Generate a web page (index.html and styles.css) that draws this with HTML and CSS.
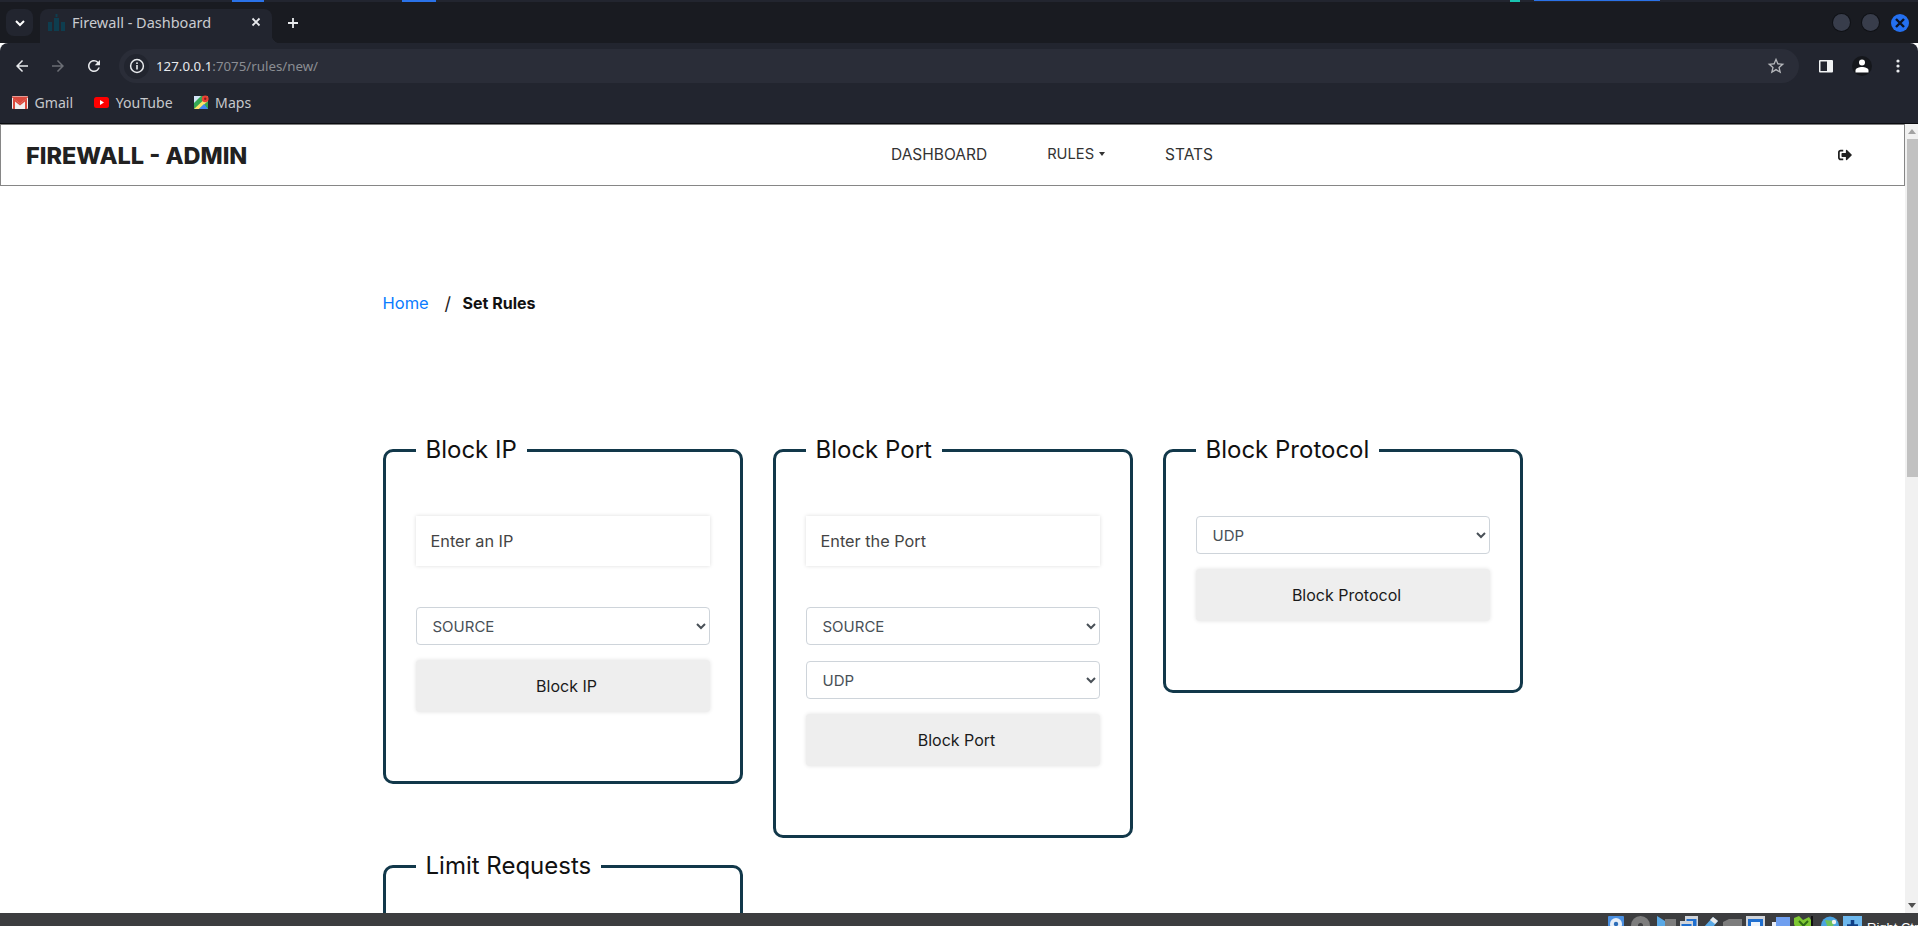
FILE: index.html
```html
<!DOCTYPE html>
<html lang="en">
<head>
<meta charset="utf-8">
<title>Firewall - Dashboard</title>
<link rel="stylesheet" href="styles.css">
</head>
<body>
<div class="desktop-strip"></div>
<header class="tabstrip">
  <button class="tab-search"><svg width="12" height="12" viewBox="0 0 12 12"><path d="M2 4l4 4 4-4" fill="none" stroke="#fff" stroke-width="2"/></svg></button>
  <div class="tab">
    <svg class="favicon" width="17" height="17" viewBox="0 0 17 17"><g fill="#0e3d4f"><rect x="0" y="8" width="4" height="9"/><rect x="6" y="4" width="5" height="13"/><rect x="13" y="8" width="4" height="9"/><rect x="7.5" y="0" width="2" height="3"/></g></svg>
    <span class="tab-title">Firewall - Dashboard</span>
    <svg class="tab-close" width="10" height="10" viewBox="0 0 10 10"><path d="M1.5 1.5l7 7M8.5 1.5l-7 7" stroke="#e8eaed" stroke-width="1.8"/></svg>
  </div>
  <svg class="new-tab" width="12" height="12" viewBox="0 0 12 12"><path d="M6 1v10M1 6h10" stroke="#e8eaed" stroke-width="1.8"/></svg>
  <div class="window-controls">
    <span class="win-btn"></span>
    <span class="win-btn"></span>
    <span class="win-btn win-close"><svg width="10" height="10" viewBox="0 0 10 10"><path d="M1 1l8 8M9 1l-8 8" stroke="#0c1220" stroke-width="2.4"/></svg></span>
  </div>
</header>
<nav class="toolbar">
  <svg class="tool" width="18" height="18" viewBox="0 0 24 24"><path fill="#e8eaed" d="M20 11H7.83l5.59-5.59L12 4l-8 8 8 8 1.41-1.41L7.83 13H20v-2z"/></svg>
  <svg class="tool" width="18" height="18" viewBox="0 0 24 24"><path fill="#6b6e75" d="M4 11h12.17l-5.59-5.59L12 4l8 8-8 8-1.41-1.41L16.17 13H4v-2z"/></svg>
  <svg class="tool" width="18" height="18" viewBox="0 0 24 24"><path fill="#e8eaed" d="M17.65 6.35A7.958 7.958 0 0 0 12 4c-4.42 0-7.99 3.58-7.99 8s3.57 8 7.99 8c3.73 0 6.84-2.55 7.73-6h-2.08A5.99 5.99 0 0 1 12 18c-3.31 0-6-2.69-6-6s2.69-6 6-6c1.66 0 3.14.69 4.22 1.78L13 11h7V4l-2.35 2.35z"/></svg>
  <div class="omnibox">
    <span class="site-info"><svg width="16" height="16" viewBox="0 0 16 16"><circle cx="8" cy="8" r="6.4" fill="none" stroke="#e8eaed" stroke-width="1.5"/><rect x="7.2" y="7" width="1.6" height="4.5" fill="#e8eaed"/><rect x="7.2" y="4.4" width="1.6" height="1.6" fill="#e8eaed"/></svg></span>
    <span class="url"><span class="url-host">127.0.0.1</span>:7075/rules/new/</span>
    <svg class="star" width="20" height="20" viewBox="0 0 24 24"><path fill="#b4b6ba" d="M22 9.24l-7.19-.62L12 2 9.19 8.63 2 9.24l5.46 4.73L5.82 21 12 17.27 18.18 21l-1.63-7.03L22 9.24zM12 15.4l-3.76 2.27 1-4.28-3.32-2.88 4.38-.38L12 6.1l1.71 4.04 4.38.38-3.32 2.88 1 4.28L12 15.4z"/></svg>
  </div>
  <div class="tool-right">
    <svg width="16" height="16" viewBox="0 0 16 16"><rect x="1" y="2" width="14" height="12.5" rx="1" fill="#f1f3f4"/><rect x="2.5" y="3.5" width="6.5" height="9.5" fill="#22252f"/></svg>
    <span class="profile"><svg width="14" height="14" viewBox="0 0 14 14"><circle cx="7" cy="3.6" r="3" fill="#fff"/><path d="M0.5 13.5v-2c0-2.2 3.5-3.4 6.5-3.4s6.5 1.2 6.5 3.4v2z" fill="#fff"/></svg></span>
    <svg class="menu-dots" width="4" height="14" viewBox="0 0 4 14"><circle cx="2" cy="2" r="1.6" fill="#e8eaed"/><circle cx="2" cy="7" r="1.6" fill="#e8eaed"/><circle cx="2" cy="12" r="1.6" fill="#e8eaed"/></svg>
  </div>
</nav>
<div class="bookmarks">
  <a class="bookmark"><svg width="16" height="13" viewBox="0 0 16 13"><rect width="16" height="13" rx="1" fill="#eee"/><path d="M1 13V2l7 5.5L15 2v11h-2V5.5L8 9.5 3 5.5V13z" fill="#d9493d"/><path d="M0 1.5l8 6 8-6V.5H0z" fill="#d9493d"/></svg>Gmail</a>
  <a class="bookmark"><svg width="15" height="11" viewBox="0 0 15 11"><rect width="15" height="11" rx="2.5" fill="#f00"/><path d="M6 3l4 2.5L6 8z" fill="#fff"/></svg>YouTube</a>
  <a class="bookmark"><svg width="15" height="15" viewBox="0 0 15 15"><rect y="1" width="14" height="13" fill="#34a853"/><path d="M0 14L14 1v5L5 14z" fill="#fbe36b"/><path d="M5 14l5-5 4 5z" fill="#4285f4"/><path d="M0 1h7L0 8z" fill="#d3e4f7"/><circle cx="11.2" cy="3.8" r="3.4" fill="#ea4335"/><circle cx="11.2" cy="3.8" r="1.2" fill="#8e1f18"/></svg>Maps</a>
</div>
<div class="viewport">
  <div class="page">
    <header class="navbar">
      <a class="brand">FIREWALL - ADMIN</a>
      <ul class="nav">
        <li>DASHBOARD</li>
        <li class="dropdown">RULES</li>
        <li>STATS</li>
      </ul>
      <svg class="logout" width="14" height="14" viewBox="0 0 512 512"><path fill="#212121" d="M497 273L329 441c-15 15-41 4.500-41-17v-96H152c-13.300 0-24-10.700-24-24v-96c0-13.300 10.700-24 24-24h136V88c0-21.400 25.900-32 41-17l168 168c9.300 9.400 9.300 24.600 0 34zM192 436v-40c0-6.600-5.400-12-12-12H96c-17.700 0-32-14.300-32-32V160c0-17.700 14.300-32 32-32h84c6.600 0 12-5.400 12-12V76c0-6.600-5.400-12-12-12H96c-53 0-96 43-96 96v192c0 53 43 96 96 96h84c6.600 0 12-5.400 12-12z"/></svg>
    </header>
    <main class="container">
      <div class="breadcrumb"><a class="crumb-link">Home</a><span class="crumb-sep">/</span><strong class="crumb-current">Set Rules</strong></div>
      <div class="cards">
        <fieldset class="card">
          <legend>Block IP</legend>
          <form class="card-form">
            <input class="field field-first" placeholder="Enter an IP">
            <select class="select"><option>SOURCE</option></select>
            <button type="button" class="btn">Block IP</button>
          </form>
        </fieldset>
        <fieldset class="card">
          <legend>Block Port</legend>
          <form class="card-form">
            <input class="field field-first" placeholder="Enter the Port">
            <select class="select"><option>SOURCE</option></select>
            <select class="select select-next"><option>UDP</option></select>
            <button type="button" class="btn">Block Port</button>
          </form>
        </fieldset>
        <fieldset class="card">
          <legend>Block Protocol</legend>
          <form class="card-form">
            <select class="select"><option>UDP</option></select>
            <button type="button" class="btn">Block Protocol</button>
          </form>
        </fieldset>
        <fieldset class="card">
          <legend>Limit Requests</legend>
          <form class="card-form">
            <input class="field field-first" placeholder="Enter a limit">
          </form>
        </fieldset>
      </div>
    </main>
  </div>
  <div class="scrollbar">
    <span class="arrow-up"></span>
    <span class="thumb"></span>
    <span class="arrow-down"></span>
  </div>
</div>
<footer class="taskbar">
  <svg width="16" height="18" viewBox="0 0 16 18"><rect width="16" height="18" rx="1" fill="#4a90e2"/><circle cx="8" cy="8" r="6" fill="#e6eef8"/><circle cx="8" cy="8" r="2.2" fill="#2d6db8"/></svg>
  <svg class="gap-a" width="19" height="18" viewBox="0 0 19 18"><circle cx="9.500" cy="9.500" r="9.500" fill="#7d7d7d"/><circle cx="9.500" cy="9.500" r="2.500" fill="#3c3d3f"/></svg>
  <svg class="gap-a" width="19" height="18" viewBox="0 0 19 18"><path d="M0 0l8 5v13H0z" fill="#5aa9e6"/><rect x="8" y="3" width="11" height="15" fill="#7d7d7d"/></svg>
  <svg width="18" height="18" viewBox="0 0 18 18"><rect x="5" width="13" height="11" fill="#d0d4da"/><rect x="6.500" y="3" width="10" height="7" fill="#1f6fd0"/><rect y="5" width="13" height="13" fill="#d0d4da"/><rect x="1.500" y="8" width="10" height="10" fill="#1f6fd0"/></svg>
  <svg width="17" height="18" viewBox="0 0 17 18"><path d="M11 1l5 4-9 11-6-4z" fill="#5aa9e6"/><path d="M11 1l5 4-3 3-5-4z" fill="#e8e8e8"/></svg>
  <svg width="19" height="18" viewBox="0 0 19 18"><path d="M0 6l6-3h13v15H0z" fill="#7d7d7d"/></svg>
  <svg width="19" height="18" viewBox="0 0 19 18"><rect width="19" height="18" fill="#d0d4da"/><rect x="2" y="3" width="15" height="15" fill="#1f6fd0"/><rect x="5" y="6" width="9" height="12" fill="#eef4fb"/></svg>
  <svg class="gap-a" width="18" height="18" viewBox="0 0 18 18"><rect x="4" y="1" width="14" height="17" fill="#6f9ff0"/><rect y="6" width="4" height="12" fill="#e8eef8"/></svg>
  <svg width="20" height="18" viewBox="0 0 20 18"><path d="M0 2l5-2 4 4 6-3 4 6-3 11H4L0 8z" fill="#7ec832"/><path d="M5 5l9 9M14 5l-9 9" stroke="#2f6b16" stroke-width="2"/><rect x="17" width="2" height="18" fill="#111"/></svg>
  <svg class="gap-a" width="18" height="18" viewBox="0 0 18 18"><circle cx="9" cy="9.500" r="9" fill="#4aa3e0"/><path d="M4 4l10 1-5 13z" fill="#6fc35c"/><circle cx="13" cy="6" r="2.200" fill="#f0f0f0"/></svg>
  <svg width="19" height="18" viewBox="0 0 19 18"><rect width="19" height="18" fill="#6db8ee"/><path d="M9.500 4v14M4 10h11" stroke="#0f3f86" stroke-width="3.500"/></svg>
  <span class="host-key">Right Ctrl</span>
</footer>
</body>
</html>
```

FILE: styles.css
```css
* { box-sizing: border-box; }
html, body { margin: 0; height: 100%; }
body {
  display: flex;
  flex-direction: column;
  height: 926px;
  overflow: hidden;
  font-family: "Inter", "Liberation Sans", sans-serif;
  background: #fff;
}
svg { display: block; flex: none; }

.desktop-strip {
  height: 2px;
  flex: none;
  background:
    linear-gradient(#2a72e8, #2a72e8) 232px 0 / 32px 2px no-repeat,
    linear-gradient(#2a72e8, #2a72e8) 402px 0 / 34px 2px no-repeat,
    linear-gradient(#19c3b0, #19c3b0) 1510px 0 / 10px 2px no-repeat,
    linear-gradient(#2a72e8, #2a72e8) 1534px 0 / 126px 1px no-repeat,
    #22252f;
}

.tabstrip {
  height: 41px;
  flex: none;
  display: flex;
  align-items: flex-end;
  background: #191b21;
  font-family: "Noto Sans", sans-serif;
}
.tab-search {
  width: 27px;
  height: 27px;
  margin: 0 7px 7px 6px;
  padding: 0;
  border: 0;
  border-radius: 8px;
  background: #22252f;
  display: flex;
  align-items: center;
  justify-content: center;
}
.tab {
  position: relative;
  width: 232px;
  height: 34px;
  display: flex;
  align-items: center;
  padding: 0 11px 8px 8px;
  background: #22252f;
  border-radius: 8px 8px 0 0;
}
.tab::after {
  content: "";
  position: absolute;
  right: -8px;
  bottom: 0;
  width: 8px;
  height: 8px;
  background: radial-gradient(circle at 100% 0, transparent 8px, #22252f 8.5px);
}
.favicon { margin-right: 7px; }
.tab-title {
  flex: 1;
  font-size: 14.500px;
  color: #c9cbd0;
  white-space: nowrap;
}
.new-tab { margin: 0 0 14px 15px; }
.window-controls {
  margin-left: auto;
  display: flex;
  gap: 12px;
  padding: 0 9px 11px 0;
}
.win-btn {
  width: 17px;
  height: 17px;
  border-radius: 50%;
  background: #383d4b;
  box-shadow: 0 0 0 1px #0f1116;
  display: flex;
  align-items: center;
  justify-content: center;
}
.win-close { background: #2470f0; box-shadow: none; width: 18px; height: 18px; }

.toolbar {
  height: 46px;
  flex: none;
  display: flex;
  align-items: flex-start;
  padding: 6px 0 0 13px;
  background: #22252f;
  border-radius: 8px 8px 0 0;
  font-family: "Noto Sans", sans-serif;
}
.tool { margin: 8px 18px 0 0; }
.omnibox {
  width: 1680px;
  height: 34px;
  margin-left: -2px;
  display: flex;
  align-items: center;
  padding: 0 13px 0 5px;
  background: #2a2d38;
  border-radius: 17px;
}
.site-info {
  width: 25px;
  height: 25px;
  margin-right: 7px;
  border-radius: 50%;
  background: #22252f;
  display: flex;
  align-items: center;
  justify-content: center;
}
.url { flex: 1; font-size: 13.300px; color: #8b8d93; }
.url-host { color: #e8eaed; }
.tool-right {
  flex: 1;
  display: flex;
  align-items: center;
  gap: 18px;
  height: 34px;
  padding-left: 19px;
}
.menu-dots { margin-left: 6px; }
.profile {
  width: 20px;
  height: 20px;
  border-radius: 50%;
  background: #15171c;
  display: flex;
  align-items: center;
  justify-content: center;
}

.bookmarks {
  height: 35px;
  flex: none;
  display: flex;
  align-items: flex-start;
  gap: 21px;
  padding: 3px 0 0 12px;
  background: #22252f;
  border-bottom: 1px solid #0b0c10;
  font-family: "Noto Sans", sans-serif;
}
.bookmark {
  display: flex;
  align-items: center;
  gap: 6.500px;
  height: 20px;
  font-size: 14.100px;
  color: #c6c8cc;
}

.viewport {
  flex: 1;
  min-height: 0;
  display: flex;
  overflow: hidden;
}
.page { flex: 1; min-width: 0; }
.navbar {
  height: 62px;
  display: flex;
  align-items: center;
  padding: 0 52px 0 25px;
  border: 1px solid #868686;
  border-top-color: #7d7d7d;
}
.brand {
  font-size: 23.500px;
  font-weight: 800;
  color: #212121;
  width: 221px;
  white-space: nowrap;
}
.nav {
  list-style: none;
  margin: 0 0 2px 644px;
  padding: 0;
  display: flex;
  gap: 60px;
  font-size: 15.500px;
  color: #333;
}
.dropdown { display: flex; align-items: center; gap: 5px; font-size: 14.700px; }
.dropdown::after {
  content: "";
  border-top: 4px solid #333;
  border-left: 3.500px solid transparent;
  border-right: 3.500px solid transparent;
}
.logout { margin-left: auto; }

.container { width: 1140px; margin: 0 auto; }
.breadcrumb {
  height: 26px;
  margin-top: 104px;
  display: flex;
  align-items: center;
  font-size: 16.500px;
}
.crumb-link { color: #0a7cff; width: 62px; }
.crumb-sep { color: #222; font-size: 18px; width: 18px; }
.crumb-current { font-weight: 700; color: #111; font-size: 16px; }

.cards {
  margin-top: 116px;
  display: grid;
  grid-template-columns: repeat(3, 360px);
  gap: 10px 30px;
  align-items: start;
}
.card {
  margin: 0;
  min-width: 0;
  padding: 0 30px 69px;
  border: 3px solid #12384a;
  border-radius: 10px;
}
.card legend {
  padding: 0 10px;
  font-size: 24px;
  line-height: 36px;
  color: #111;
}
.card-form { display: flex; flex-direction: column; margin-top: 48px; }
.field {
  width: 294px;
  height: 50px;
  margin-bottom: 41px;
  padding: 0 15px;
  border: 0;
  background: #fff;
  box-shadow: 0 0 4px rgba(0, 0, 0, .14);
  font: 16.300px "Inter", sans-serif;
}
.field::placeholder { color: #444; opacity: 1; }
.select {
  width: 294px;
  height: 38px;
  padding: 0 12px;
  border: 1px solid #ced4da;
  border-radius: 4px;
  background: #fff;
  color: #495057;
  font: 15px "Inter", sans-serif;
}
.select-next { margin-top: 16px; }
.btn {
  width: 294px;
  height: 52px;
  margin-top: 15px;
  padding: 0 0 0 8px;
  border: 0;
  border-radius: 4px;
  background: #eee;
  box-shadow: 0 0 4px rgba(0, 0, 0, .12);
  color: #1a1a1a;
  font: 16px "Inter", sans-serif;
}

.scrollbar {
  position: relative;
  width: 13px;
  flex: none;
  background: #f1f1f1;
  display: flex;
  flex-direction: column;
  align-items: flex-end;
}
.arrow-up {
  margin: 5px 0 0;
  align-self: center;
  border-bottom: 5px solid #a3a3a3;
  border-left: 4px solid transparent;
  border-right: 4px solid transparent;
}
.thumb {
  width: 11px;
  height: 338px;
  margin-top: 5px;
  background: #c1c1c1;
}
.arrow-down {
  margin: auto 0 5px;
  align-self: center;
  border-top: 5px solid #505050;
  border-left: 4px solid transparent;
  border-right: 4px solid transparent;
}

.taskbar {
  height: 13px;
  flex: none;
  display: flex;
  justify-content: flex-end;
  gap: 4px;
  padding-top: 3px;
  background: #3c3d3f;
  overflow: hidden;
}
.gap-a { margin-left: 3px; }
.host-key {
  margin-left: 1px;
  width: 51px;
  padding-top: 3px;
  overflow: hidden;
  white-space: nowrap;
  font: 13px/18px "Liberation Sans", sans-serif;
  color: #fff;
}
```
